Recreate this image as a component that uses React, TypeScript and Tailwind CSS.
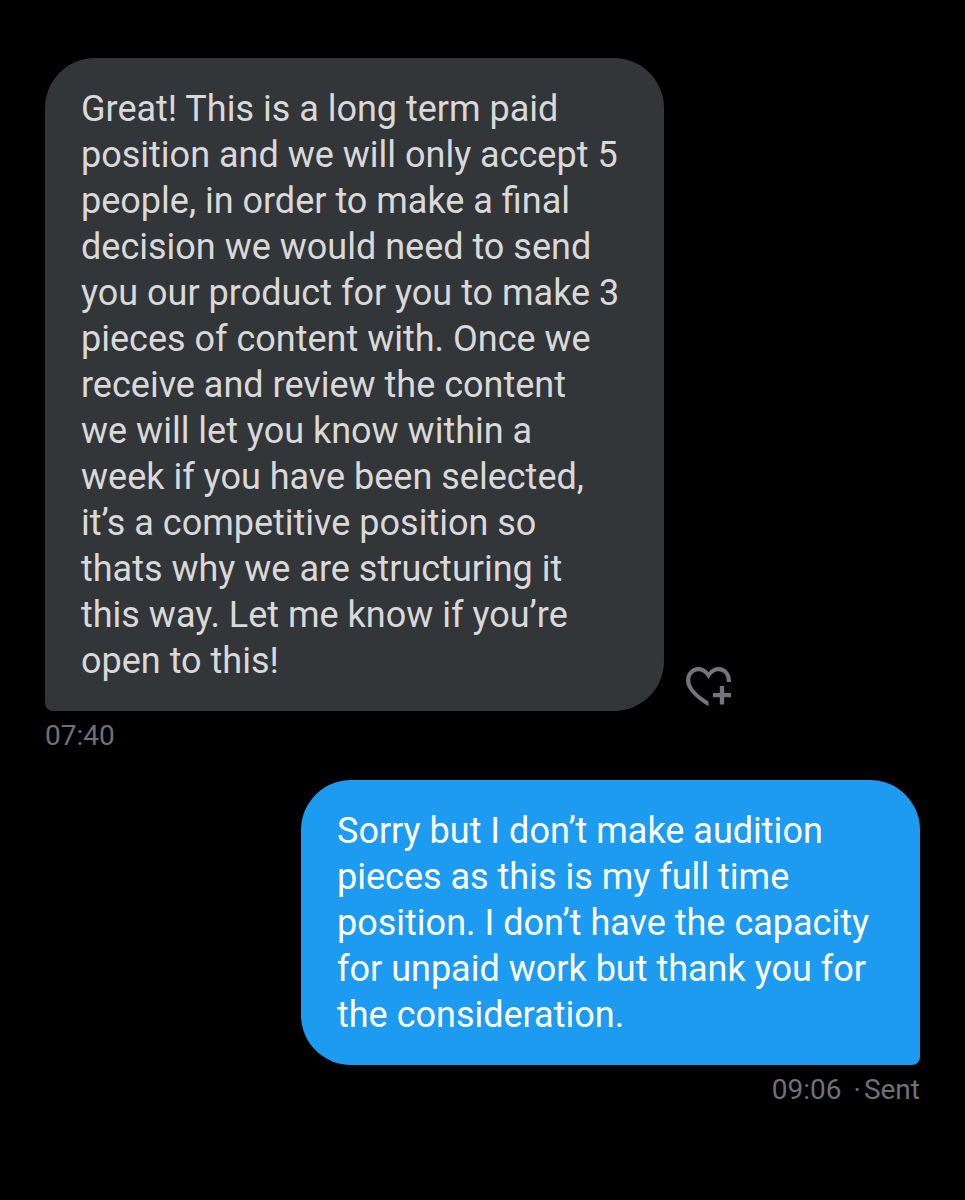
import React from "react";

interface Message {
  text: string;
  time: string;
  status?: string;
  mine: boolean;
}

const messages: Message[] = [
  {
    text: `Great! This is a long term paid
position and we will only accept 5
people, in order to make a final
decision we would need to send
you our product for you to make 3
pieces of content with. Once we
receive and review the content
we will let you know within a
week if you have been selected,
it’s a competitive position so
thats why we are structuring it
this way. Let me know if you’re
open to this!`,
    time: "07:40",
    mine: false,
  },
  {
    text: `Sorry but I don’t make audition
pieces as this is my full time
position. I don’t have the capacity
for unpaid work but thank you for
the consideration.`,
    time: "09:06",
    status: "Sent",
    mine: true,
  },
];

const HeartPlus: React.FC = () => (
  <svg
    viewBox="0 0 46 40"
    className="h-10 w-[46px]"
    fill="currentColor"
    aria-hidden="true"
  >
    <path d="M22.500 39.300C9 31 0 22 0 13.500C0 6 5.500 0 12.400 0C16.500 0 20 2 22.500 5.200C25 2 28.500 0 32.600 0C39.500 0 45 6 45 13.500V15H40.700V13.500C40.700 8 37.200 4.300 32.600 4.300C28.500 4.300 25.500 6.800 22.500 12C19.500 6.800 16.500 4.300 12.400 4.300C7.800 4.300 4.300 8 4.300 13.500C4.300 20 11 27.500 22.500 34.400Z" />
    <path d="M33.800 19H38.200V26H45V30.300H38.200V37.500H33.800V30.300H27V26H33.800Z" />
  </svg>
);

const MessageRow: React.FC<{ message: Message }> = ({ message }) => {
  const { text, time, status, mine } = message;

  return (
    <li className={`flex flex-col ${mine ? "items-end" : "items-start"}`}>
      <div className="flex w-full items-end gap-[22px]">
        <p
          className={`w-full max-w-[619px] whitespace-pre-line px-9 pt-7 pb-[27px] text-[36px] leading-[46px] ${
            mine
              ? "ml-auto rounded-[50px] rounded-br-lg bg-[#1d9bf0] text-white"
              : "rounded-[50px] rounded-bl-lg bg-[#333639] text-[#d9d9d9]"
          }`}
        >
          {text}
        </p>
        {!mine && (
          <button
            type="button"
            aria-label="Add reaction"
            className="mb-1 shrink-0 cursor-pointer text-[#71767b]"
          >
            <HeartPlus />
          </button>
        )}
      </div>
      <div className="mt-[7px] flex gap-3 text-[28px] leading-9 text-[#6e7175]">
        <time>{time}</time>
        {status && (
          <span className="flex gap-[3px]">
            <span>·</span>
            <span>{status}</span>
          </span>
        )}
      </div>
    </li>
  );
};

export default function App() {
  return (
    <main className="min-h-screen bg-black px-[45px] pt-[58px] pb-12 font-['Roboto',sans-serif]">
      <ul className="flex flex-col gap-[26px]">
        {messages.map((message) => (
          <MessageRow key={message.time} message={message} />
        ))}
      </ul>
    </main>
  );
}
